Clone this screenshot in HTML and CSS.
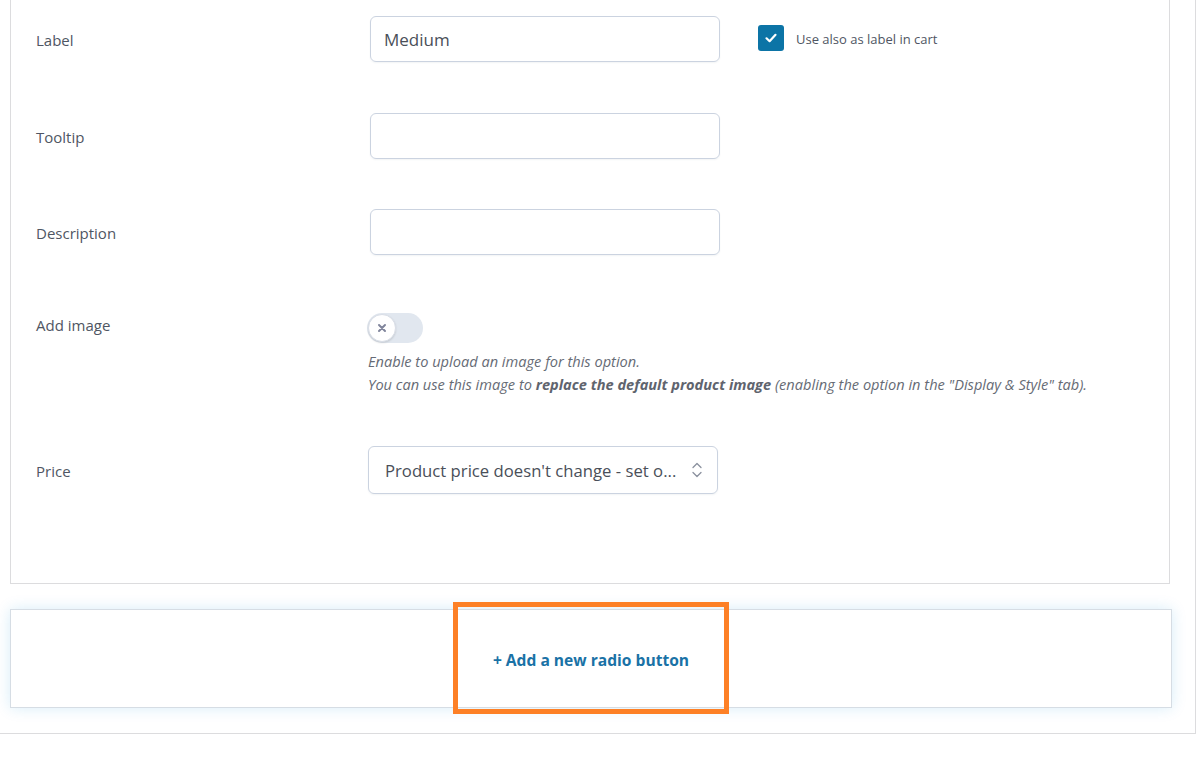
FILE: index.html
```html
<!DOCTYPE html>
<html lang="en">
<head>
<meta charset="utf-8">
<title>Radio option</title>
<link rel="stylesheet" href="styles.css">
</head>
<body>
<div class="wrap">
  <div class="card">
    <div class="row">
      <div class="lbl">Label</div>
      <div class="field">
        <div class="text-input">Medium</div>
        <div class="check">
          <span class="check-box">
            <svg width="14" height="14" viewBox="0 0 14 14"><path d="M2.5 7.3 L5.6 10.2 L11.5 3.8" fill="none" stroke="#fff" stroke-width="2.2" stroke-linecap="round" stroke-linejoin="round"/></svg>
          </span>
          <span class="check-text">Use also as label in cart</span>
        </div>
      </div>
    </div>
    <div class="row row-tooltip">
      <div class="lbl">Tooltip</div>
      <div class="field"><div class="text-input"></div></div>
    </div>
    <div class="row row-desc">
      <div class="lbl">Description</div>
      <div class="field"><div class="text-input"></div></div>
    </div>
    <div class="row row-image">
      <div class="lbl lbl-top">Add image</div>
      <div class="field-col">
        <div class="toggle">
          <span class="knob">
            <svg width="10" height="10" viewBox="0 0 10 10"><path d="M2 2 L8 8 M8 2 L2 8" stroke="#80859c" stroke-width="2" stroke-linecap="round"/></svg>
          </span>
        </div>
        <div class="help">
          <div>Enable to upload an image for this option.</div>
          <div>You can use this image to <b>replace the default product image</b> (enabling the option in the "Display &amp; Style" tab).</div>
        </div>
      </div>
    </div>
    <div class="row row-price">
      <div class="lbl">Price</div>
      <div class="field">
        <div class="select">
          <span class="select-text">Product price doesn't change - set o...</span>
          <svg class="select-arrows" width="12" height="18" viewBox="0 0 12 18"><path d="M2 6.5 L6 2.5 L10 6.5 M2 11.5 L6 15.5 L10 11.5" fill="none" stroke="#8a909e" stroke-width="1.3" stroke-linecap="round" stroke-linejoin="round"/></svg>
        </div>
      </div>
    </div>
  </div>
  <div class="add-box">
    <span class="add-link">+ Add a new radio button</span>
    <span class="highlight"></span>
  </div>
</div>
</body>
</html>
```
FILE: styles.css
```css
html, body {
  margin: 0;
  padding: 0;
  background: #fff;
}
body {
  font-family: "Open Sans", "Noto Sans", sans-serif;
  color: #4f5663;
}
.wrap {
  width: 1196px;
  box-sizing: border-box;
  padding: 0 25px 25px 10px;
  border-right: 1px solid #dcdcde;
  border-bottom: 1px solid #dcdcde;
}
.card {
  width: 1160px;
  box-sizing: border-box;
  border: 1px solid #dcdcde;
  border-top: none;
  padding: 16px 0 89px 25px;
}
.row {
  display: grid;
  grid-template-columns: 334px 1fr;
  align-items: center;
  margin-bottom: 51px;
}
.row-tooltip { margin-bottom: 50px; }
.row-desc { margin-bottom: 58px; }
.row-image { align-items: start; margin-bottom: 50px; }
.row-price { margin-bottom: 0; }
.lbl {
  font-size: 15px;
  line-height: 24px;
  padding-top: 2px;
  color: #4f5663;
}
.lbl-top { line-height: 22px; padding-top: 1px; }
.field {
  display: flex;
  align-items: center;
}
.text-input {
  width: 350px;
  height: 46px;
  box-sizing: border-box;
  border: 1px solid #cbd3e0;
  border-radius: 6px;
  box-shadow: 0 1px 2px rgba(40, 60, 90, 0.06);
  padding: 1px 13px 0;
  font-size: 17px;
  line-height: 44px;
  color: #4a4f59;
}
.check {
  display: flex;
  align-items: center;
  margin-left: 38px;
}
.check-box {
  width: 26px;
  height: 26px;
  border-radius: 3px;
  background: #0c74a6;
  display: flex;
  align-items: center;
  justify-content: center;
  margin-top: -2px;
}
.check-text {
  margin-left: 12px;
  font-size: 13px;
  color: #4f5663;
}
.field-col {
  display: flex;
  flex-direction: column;
  margin-left: -2px;
}
.toggle {
  width: 56px;
  height: 30px;
  border-radius: 15px;
  background: #e1e7ef;
  margin-left: -1px;
  position: relative;
}
.knob {
  position: absolute;
  left: 1px;
  top: 1px;
  width: 28px;
  height: 28px;
  box-sizing: border-box;
  border-radius: 50%;
  background: #fff;
  border: 1px solid #d9dee7;
  box-shadow: 0 1px 2px rgba(0, 0, 0, 0.12);
  display: flex;
  align-items: center;
  justify-content: center;
}
.help {
  margin-top: 7px;
  font-size: 14.6px;
  line-height: 23px;
  font-style: italic;
  color: #666b75;
}
.help b { font-weight: 700; color: #5f646e; }
.select {
  width: 350px;
  height: 48px;
  box-sizing: border-box;
  margin-left: -2px;
  border: 1px solid #cbd3e0;
  border-radius: 6px;
  box-shadow: 0 1px 2px rgba(40, 60, 90, 0.06);
  padding: 0 14px 0 16px;
  display: flex;
  align-items: center;
  justify-content: space-between;
}
.select-text {
  font-size: 16.7px;
  color: #4a4f59;
  white-space: nowrap;
}
.add-box {
  position: relative;
  margin-top: 25px;
  width: 1162px;
  height: 99px;
  box-sizing: border-box;
  border: 1px solid #d6dde4;
  box-shadow: 0 0 14px rgba(0, 140, 220, 0.16);
  display: flex;
  align-items: center;
  justify-content: center;
}
.add-link {
  font-size: 15.6px;
  font-weight: 700;
  color: #1a72a6;
  margin-top: 3px;
}
.highlight {
  position: absolute;
  left: 442px;
  top: -8px;
  width: 276px;
  height: 112px;
  box-sizing: border-box;
  border: 5px solid #fd8026;
}
```
